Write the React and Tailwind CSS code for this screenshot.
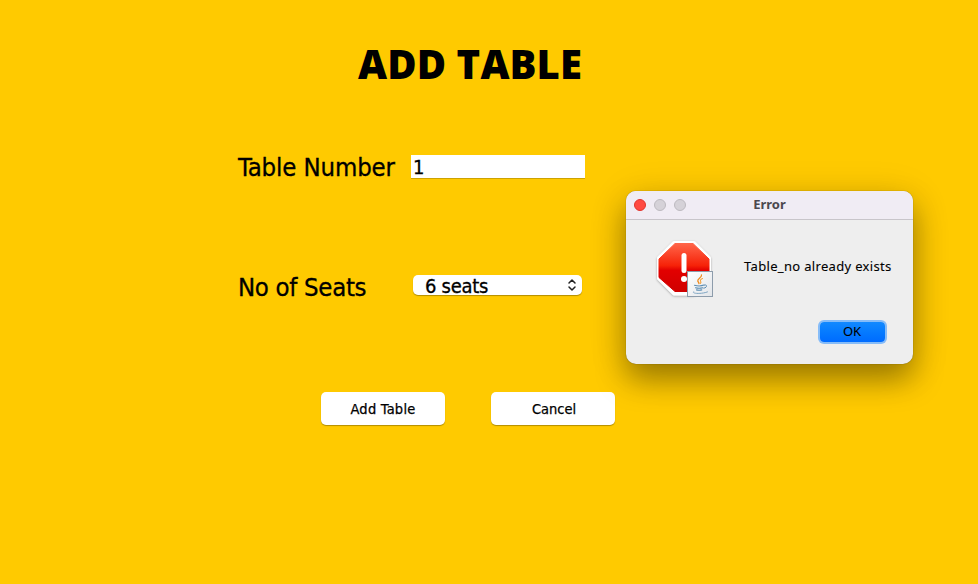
import React from "react";

const tahoma = "font-['DejaVu_Sans_Condensed','DejaVu_Sans','Noto_Sans',sans-serif]";

function ErrorIcon() {
  return (
    <svg width="64" height="64" viewBox="0 0 64 64" className="block">
      <defs>
        <linearGradient id="stop" x1="0" y1="0" x2="0" y2="1">
          <stop offset="0" stopColor="#ff6549" />
          <stop offset="0.46" stopColor="#f62208" />
          <stop offset="0.56" stopColor="#e20000" />
          <stop offset="1" stopColor="#d00000" />
        </linearGradient>
        <linearGradient id="tile" x1="0" y1="0" x2="1" y2="1">
          <stop offset="0" stopColor="#ffffff" />
          <stop offset="1" stopColor="#e2e5e9" />
        </linearGradient>
        <filter id="soft" x="-20%" y="-20%" width="140%" height="140%">
          <feDropShadow dx="0" dy="0.8" stdDeviation="0.9" floodColor="#000" floodOpacity="0.3" />
        </filter>
      </defs>
      <path
        d="M22 4.500H42L57.500 20V40.500L42 56H22L6.500 40.500V20Z"
        fill="#fff" stroke="#fff" strokeWidth="3" strokeLinejoin="round" filter="url(#soft)"
      />
      <path
        d="M23 5.500H41L57 21V39.500L41 53.500H23L7 39.500V21Z"
        fill="url(#stop)" stroke="url(#stop)" strokeWidth="1" strokeLinejoin="round"
      />
      <rect x="29.500" y="15" width="5" height="20" rx="2.500" fill="#fff" />
      <circle cx="32" cy="41" r="3" fill="#fff" />
      <rect x="35.500" y="33.500" width="25" height="25" fill="url(#tile)" stroke="#8d9cab" />
      <g fill="none" strokeLinecap="round">
        <path d="M49.500 37c.6 2.300-4.300 3.500-3.700 6 .2.900 1 1.500 1.200 2.500" stroke="#f08a1c" strokeWidth="1.300" />
        <path d="M50.500 40.500c-2 .9-2.600 2-1.800 3 .5.700.3 1.200-.3 1.900" stroke="#f3a03b" strokeWidth="1.100" />
        <path d="M42.500 47.300c3 .8 7 .7 9.500-.2M43.500 49.700c2.500.7 5 .6 7.300 0M44.500 51.900c1.800.5 3.700.4 5.300 0" stroke="#5b8db3" strokeWidth="1.100" />
        <path d="M52.500 47c3-.8 3 2.700-.7 3.200" stroke="#5b8db3" strokeWidth="1" />
        <path d="M41.500 53.700c-2.500 2 8 2.600 14 .2" stroke="#7fa5c2" strokeWidth="1" />
      </g>
    </svg>
  );
}

function ErrorDialog() {
  return (
    <div className="absolute left-[626px] top-[191px] flex h-[173px] w-[287px] flex-col overflow-visible rounded-[10px] bg-[#eeeeee] shadow-[0_0_1px_rgba(0,0,0,0.55),0_16px_30px_rgba(0,0,0,0.34),0_6px_40px_rgba(0,0,0,0.12)]">
      <div className="flex h-[29px] shrink-0 items-center rounded-t-[10px] border-b border-[#c8c5ca] bg-[#f0ecf4] pl-2">
        <div className="flex w-[76px] gap-2">
          <span className="size-3 rounded-full border border-[#e2342c] bg-[#ff4a42]" />
          <span className="size-3 rounded-full border border-[#bdbac0] bg-[#d5d2d8]" />
          <span className="size-3 rounded-full border border-[#bdbac0] bg-[#d5d2d8]" />
        </div>
        <div className="flex-1 pr-[84px] pb-[2px] text-center font-['Noto_Sans',sans-serif] text-[13px] leading-[26px] font-bold text-[#4b484e]">
          <span>Error</span>
        </div>
      </div>
      <div className="flex pt-[18px] pl-[26px]">
        <ErrorIcon />
        <span className="ml-7 pt-[18px] font-['Noto_Sans',sans-serif] text-[13px] leading-[20px] tracking-[0.33px] whitespace-nowrap text-black [-webkit-text-stroke:0.1px_#000]">
          Table_no already exists
        </span>
      </div>
      <div className="flex justify-end pt-[20px] pr-[28px]">
        <button className="flex h-[20px] w-[65px] justify-center rounded-[4px] bg-linear-to-b from-[#1289ff] to-[#006bff] pr-px font-['Noto_Sans',sans-serif] text-[13px] leading-[19px] tracking-[-0.2px] text-black shadow-[0_0_0_2px_#86bcf8] [-webkit-text-stroke:0.1px_#000]">
          OK
        </button>
      </div>
    </div>
  );
}

export default function App() {
  return (
    <main className={"relative flex h-[584px] w-[978px] flex-col overflow-hidden bg-[#ffca00] text-black " + tahoma}>
      <h1 className="mt-[37px] ml-[358px] h-[54px] font-['Open_Sans','Noto_Sans',sans-serif] text-[40px] leading-[54px] font-extrabold tracking-[0.12px] whitespace-nowrap">
        ADD TABLE
      </h1>
      <div className="mt-[59px] flex h-[34px] items-center pl-[238px]">
        <label className="w-[173px] text-[25.500px] leading-[34px] tracking-[-0.12px] whitespace-nowrap [-webkit-text-stroke:0.3px_#000]">Table Number</label>
        <div className="mb-[1px] h-[23px] w-[174px] bg-white pl-[2px] text-[20px] leading-[24px] shadow-[0_1px_0_#cda200] [-webkit-text-stroke:0.3px_#000]">
          1
        </div>
      </div>
      <div className="mt-[86px] flex h-[34px] items-center pl-[238px]">
        <label className="w-[175px] text-[25.500px] leading-[34px] tracking-[-0.3px] whitespace-nowrap [-webkit-text-stroke:0.3px_#000]">No of Seats</label>
        <div className="mb-[4px] flex h-[20px] w-[169px] items-center justify-between rounded-[5px] bg-white pr-[5px] pl-3 text-[20px] leading-[20px] tracking-[-0.3px] shadow-[0_1px_1px_rgba(0,0,0,0.3)]">
          <span className="pt-px [-webkit-text-stroke:0.3px_#000]">6 seats</span>
          <svg width="10" height="14" viewBox="0 0 10 14" fill="none" stroke="#222" strokeWidth="1.500" strokeLinecap="round" strokeLinejoin="round">
            <path d="M2 5 5 2 8 5M2 9l3 3 3-3" />
          </svg>
        </div>
      </div>
      <div className="mt-[88px] flex gap-[46px] pl-[321px]">
        <button className="h-[33px] w-[124px] rounded-[5px] bg-white pt-[2px] text-[14.500px] tracking-[0.25px] shadow-[0_1px_1px_rgba(0,0,0,0.3)] [-webkit-text-stroke:0.25px_#000]">
          Add Table
        </button>
        <button className="h-[33px] w-[124px] rounded-[5px] bg-white pt-[2px] pl-[2px] text-[14.500px] shadow-[0_1px_1px_rgba(0,0,0,0.3)] [-webkit-text-stroke:0.25px_#000]">
          Cancel
        </button>
      </div>
      <ErrorDialog />
    </main>
  );
}
